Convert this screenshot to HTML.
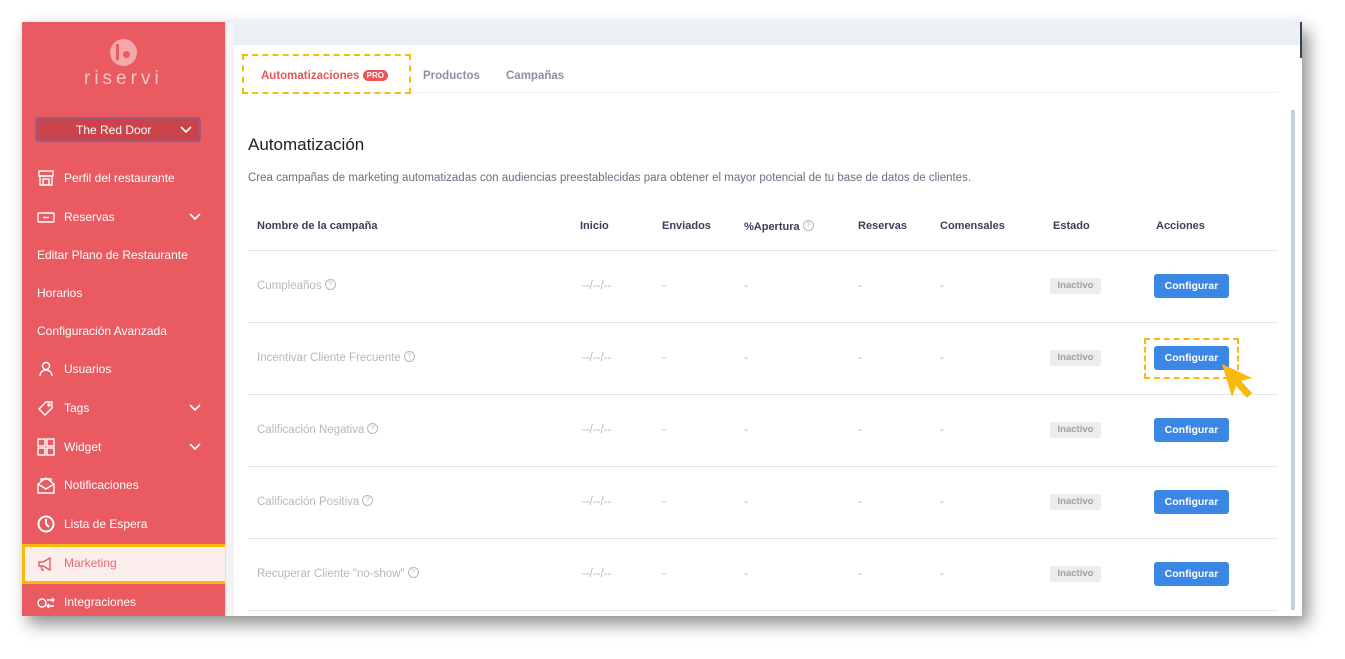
<!DOCTYPE html>
<html><head><meta charset="utf-8"><style>
*{margin:0;padding:0;box-sizing:border-box}
body{width:1345px;height:659px;background:#fff;position:relative;overflow:hidden;font-family:"Liberation Sans",sans-serif}
.frame{position:absolute;left:22px;top:22px;width:1280px;height:594px;background:#fff;box-shadow:6px 8px 16px rgba(0,0,0,.45);overflow:hidden}
.side{position:absolute;left:0;top:0;width:203px;height:594px;background:#ea5a61}
.gap{position:absolute;left:203px;top:0;width:9px;height:594px;background:#f3f3f3;border-left:1px solid #ddd}
.top{position:absolute;left:212px;top:0;right:0;height:23px;background:#ebf0f3}
.s{position:absolute;color:#fff;font-size:12px;white-space:nowrap}
.ic{position:absolute;left:15px;width:18px;height:18px}
.chev{position:absolute;left:166px;width:14px;height:10px}
.t{position:absolute;white-space:nowrap}
.h{font-size:11px;font-weight:bold;color:#3a3f5c;top:198px}
.g{color:#b5b8c0;font-size:11.5px}
.badge{position:absolute;left:1028px;width:51px;height:16px;background:#ececec;color:#a0a0a0;font-size:9.5px;font-weight:bold;text-align:center;line-height:16px;border-radius:2px}
.btn{position:absolute;left:1132px;width:75px;height:24px;background:#3b87e6;color:#fff;font-size:10.5px;font-weight:bold;text-align:center;line-height:24px;border-radius:3px}
.line{position:absolute;left:226px;width:1030px;height:1px;background:#e2e4e8}
.q{display:inline-block;width:11px;height:11px;border:1px solid #b5b8c0;border-radius:50%;font-size:7px;line-height:9px;text-align:center;vertical-align:3px;margin-left:3px;color:#b5b8c0}
</style></head><body>
<div class="frame">
<div class="side">
 <div style="position:absolute;left:88px;top:17px;width:27px;height:27px;border-radius:50%;background:#f3a8ac"></div>
 <div style="position:absolute;left:94px;top:22px;width:3px;height:16px;background:#ea5a61"></div>
 <div style="position:absolute;left:101px;top:29px;width:7px;height:7px;border-radius:50%;background:#ea5a61"></div>
 <div class="s" style="left:62px;top:46px;font-size:19px;letter-spacing:4px;color:#f7c3c5">riservi</div>
 <div style="position:absolute;left:13px;top:95px;width:166px;height:25px;background:#c9444b;border:2px solid #9b5c80;border-radius:3px"></div>
 <div class="s" style="left:54px;top:101px">The Red Door</div>
 <svg class="chev" style="left:157px;top:103px" viewBox="0 0 14 10"><path d="M2 2l5 5 5-5" stroke="#fff" stroke-width="1.6" fill="none"/></svg>

 <svg class="ic" style="top:147px" viewBox="0 0 18 18" fill="none" stroke="#fff" stroke-width="1.4"><rect x="2" y="2" width="14" height="5"/><rect x="3" y="7" width="12" height="9"/><rect x="6" y="10" width="6" height="6"/></svg>
 <div class="s" style="left:42px;top:149px">Perfil del restaurante</div>
 <svg class="ic" style="top:186px" viewBox="0 0 18 18" fill="none" stroke="#fff" stroke-width="1.4"><rect x="1" y="5" width="16" height="9" rx="1"/><path d="M6 9.5h6"/></svg>
 <div class="s" style="left:42px;top:188px">Reservas</div>
 <svg class="chev" style="top:190px" viewBox="0 0 14 10"><path d="M2 2l5 5 5-5" stroke="#fff" stroke-width="1.6" fill="none"/></svg>
 <div class="s" style="left:15px;top:226px">Editar Plano de Restaurante</div>
 <div class="s" style="left:15px;top:264px">Horarios</div>
 <div class="s" style="left:15px;top:302px">Configuración Avanzada</div>
 <svg class="ic" style="top:338px" viewBox="0 0 18 18" fill="none" stroke="#fff" stroke-width="1.4"><circle cx="9" cy="6" r="3.5"/><path d="M3 16c0-4 3-6 6-6s6 2 6 6"/></svg>
 <div class="s" style="left:42px;top:340px">Usuarios</div>
 <svg class="ic" style="top:377px" viewBox="0 0 18 18" fill="none" stroke="#fff" stroke-width="1.4"><path d="M9 3h6v6l-7 7-6-6z"/><circle cx="12" cy="6" r="1"/></svg>
 <div class="s" style="left:42px;top:379px">Tags</div>
 <svg class="chev" style="top:381px" viewBox="0 0 14 10"><path d="M2 2l5 5 5-5" stroke="#fff" stroke-width="1.6" fill="none"/></svg>
 <svg class="ic" style="top:416px" viewBox="0 0 18 18" fill="none" stroke="#fff" stroke-width="1.4"><rect x="1" y="1" width="7" height="7"/><rect x="10" y="1" width="7" height="7"/><rect x="1" y="10" width="7" height="7"/><rect x="10" y="10" width="7" height="7"/></svg>
 <div class="s" style="left:42px;top:418px">Widget</div>
 <svg class="chev" style="top:420px" viewBox="0 0 14 10"><path d="M2 2l5 5 5-5" stroke="#fff" stroke-width="1.6" fill="none"/></svg>
 <svg class="ic" style="top:454px" viewBox="0 0 18 18" fill="none" stroke="#fff" stroke-width="1.4"><path d="M1 8l8-6 8 6v9H1z"/><path d="M1 8l8 5 8-5M4 6V3h10v3"/></svg>
 <div class="s" style="left:42px;top:456px">Notificaciones</div>
 <svg class="ic" style="top:493px" viewBox="0 0 18 18" fill="none" stroke="#fff" stroke-width="2"><circle cx="9" cy="9" r="7.5"/><path d="M9 4v5l3 3"/></svg>
 <div class="s" style="left:42px;top:495px">Lista de Espera</div>
 <div style="position:absolute;left:0;top:522px;width:206px;height:40px;background:#fdeeee;border:3px solid #f8bb0b"></div>
 <svg class="ic" style="top:533px" viewBox="0 0 18 18" fill="none" stroke="#ea5a61" stroke-width="1.4"><path d="M2 7h4l7-4v12l-7-4H2z"/><path d="M4 11l1 4h2"/></svg>
 <div class="s" style="left:42px;top:534px;color:#ea6a70">Marketing</div>
 <svg class="ic" style="top:572px" viewBox="0 0 18 18" fill="none" stroke="#fff" stroke-width="1.4"><circle cx="5" cy="9" r="4"/><path d="M10 6h7M10 12h7M15 4l2 2-2 2M12 10l-2 2 2 2"/></svg>
 <div class="s" style="left:42px;top:573px">Integraciones</div>
</div>
<div class="gap"></div>
<div class="top"></div>
<div style="position:absolute;left:1278px;top:0;width:2px;height:36px;background:#3a3f5c"></div>
<div style="position:absolute;left:1269px;top:88px;width:4px;height:500px;background:#c9d0dd"></div>
<div style="position:absolute;left:222px;top:70px;width:1034px;height:1px;background:#eef2f8"></div>
<div style="position:absolute;left:220px;top:32px;width:169px;height:40px;border:2px dashed #f8bb0b"></div>
<div class="t" style="left:239px;top:48px;font-size:11.5px;font-weight:bold;color:#e9545b">Automatizaciones <span style="background:#e9545b;color:#fff;font-size:8px;padding:1px 4px;border-radius:7px;vertical-align:1px">PRO</span></div>
<div class="t" style="left:401px;top:48px;font-size:11.5px;font-weight:bold;color:#8a90a4">Productos</div>
<div class="t" style="left:484px;top:48px;font-size:11.5px;font-weight:bold;color:#8a90a4">Campañas</div>
<div class="t" style="left:226px;top:113px;font-size:17px;color:#1e1e24">Automatización</div>
<div class="t" style="left:226px;top:150px;font-size:11.5px;color:#6a6f80">Crea campañas de marketing automatizadas con audiencias preestablecidas para obtener el mayor potencial de tu base de datos de clientes.</div>
<div class="t h" style="left:235px">Nombre de la campaña</div>
<div class="t h" style="left:558px">Inicio</div>
<div class="t h" style="left:640px">Enviados</div>
<div class="t h" style="left:722px">%Apertura<span class="q" style="font-weight:normal">?</span></div>
<div class="t h" style="left:836px">Reservas</div>
<div class="t h" style="left:918px">Comensales</div>
<div class="t h" style="left:1031px">Estado</div>
<div class="t h" style="left:1134px">Acciones</div>
<div class="line" style="top:228px"></div>

<div class="t g" style="left:235px;top:257px">Cumpleaños<span class="q">?</span></div>
<div class="t g" style="left:235px;top:329px">Incentivar Cliente Frecuente<span class="q">?</span></div>
<div class="t g" style="left:235px;top:401px">Calificación Negativa<span class="q">?</span></div>
<div class="t g" style="left:235px;top:473px">Calificación Positiva<span class="q">?</span></div>
<div class="t g" style="left:235px;top:545px">Recuperar Cliente "no-show"<span class="q">?</span></div>

<div class="t g" style="left:560px;top:258px">--/--/--</div><div class="t g" style="left:640px;top:258px">-</div><div class="t g" style="left:722px;top:258px">-</div><div class="t g" style="left:836px;top:258px">-</div><div class="t g" style="left:918px;top:258px">-</div>
<div class="t g" style="left:560px;top:330px">--/--/--</div><div class="t g" style="left:640px;top:330px">-</div><div class="t g" style="left:722px;top:330px">-</div><div class="t g" style="left:836px;top:330px">-</div><div class="t g" style="left:918px;top:330px">-</div>
<div class="t g" style="left:560px;top:402px">--/--/--</div><div class="t g" style="left:640px;top:402px">-</div><div class="t g" style="left:722px;top:402px">-</div><div class="t g" style="left:836px;top:402px">-</div><div class="t g" style="left:918px;top:402px">-</div>
<div class="t g" style="left:560px;top:474px">--/--/--</div><div class="t g" style="left:640px;top:474px">-</div><div class="t g" style="left:722px;top:474px">-</div><div class="t g" style="left:836px;top:474px">-</div><div class="t g" style="left:918px;top:474px">-</div>
<div class="t g" style="left:560px;top:546px">--/--/--</div><div class="t g" style="left:640px;top:546px">-</div><div class="t g" style="left:722px;top:546px">-</div><div class="t g" style="left:836px;top:546px">-</div><div class="t g" style="left:918px;top:546px">-</div>

<div class="badge" style="top:256px">Inactivo</div><div class="btn" style="top:252px">Configurar</div>
<div class="line" style="top:300px"></div>
<div class="badge" style="top:328px">Inactivo</div><div class="btn" style="top:324px">Configurar</div>
<div class="line" style="top:372px"></div>
<div class="badge" style="top:400px">Inactivo</div><div class="btn" style="top:396px">Configurar</div>
<div class="line" style="top:444px"></div>
<div class="badge" style="top:472px">Inactivo</div><div class="btn" style="top:468px">Configurar</div>
<div class="line" style="top:516px"></div>
<div class="badge" style="top:544px">Inactivo</div><div class="btn" style="top:540px">Configurar</div>
<div class="line" style="top:588px"></div>

<div style="position:absolute;left:1122px;top:316px;width:95px;height:41px;border:2px dashed #f8bb0b"></div>
<svg style="position:absolute;left:1196px;top:340px" width="40" height="40" viewBox="0 0 40 40"><path d="M4 2l30 14-11 3 11 12-5 5-11-12-4 11z" fill="#f8bb0b"/></svg>
</div>
</body></html>
